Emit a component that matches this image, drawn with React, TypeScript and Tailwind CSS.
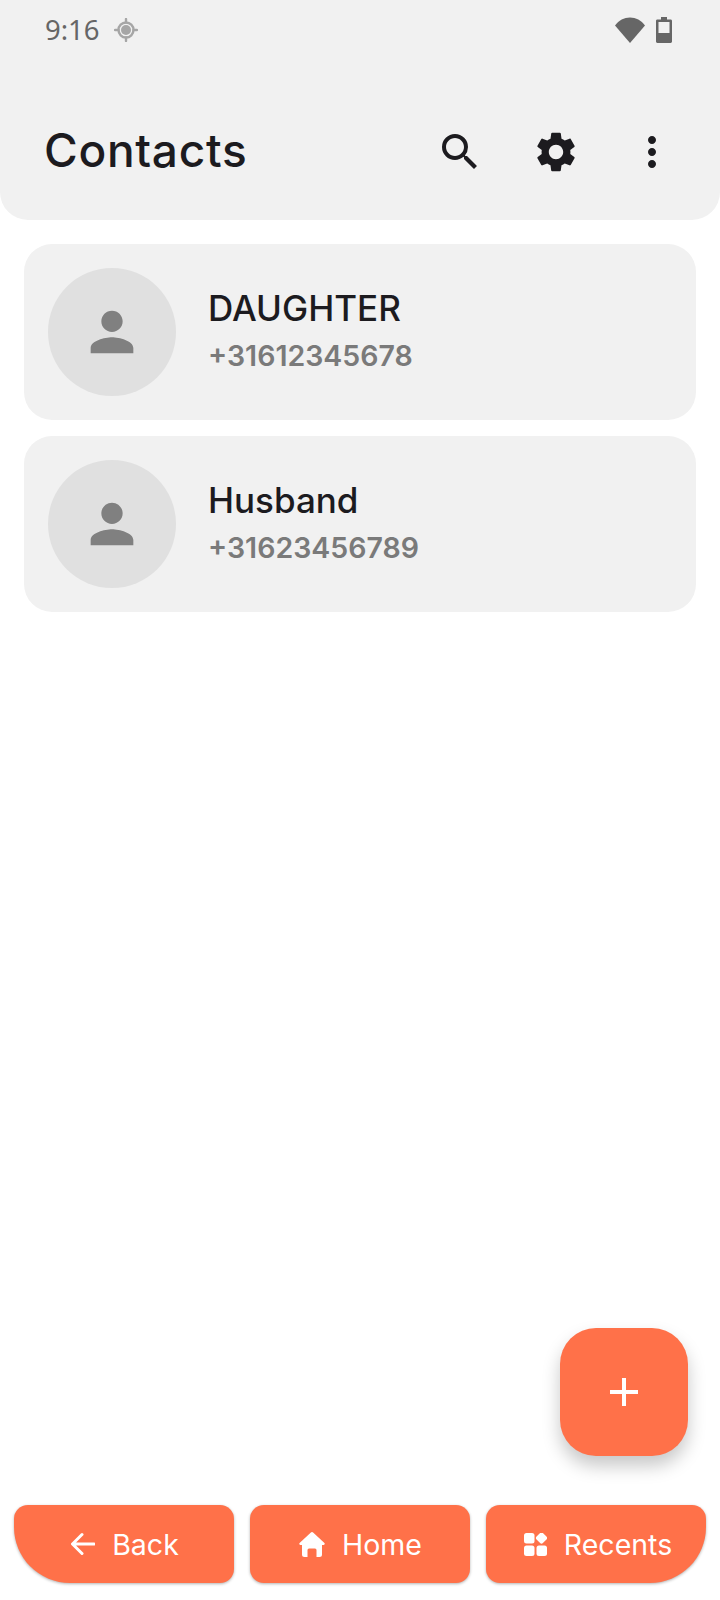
import React from "react";

function MaterialIcon({ d, className }: { d: string; className: string }) {
  return (
    <svg viewBox="0 0 24 24" fill="currentColor" className={className}>
      <path d={d} />
    </svg>
  );
}

const PERSON = "M12 12c2.21 0 4-1.79 4-4s-1.79-4-4-4-4 1.79-4 4 1.79 4 4 4zm0 2c-2.67 0-8 1.34-8 4v2h16v-2c0-2.66-5.33-4-8-4z";
const SEARCH = "M15.5 14h-.79l-.28-.27A6.471 6.471 0 0 0 16 9.5 6.5 6.5 0 1 0 9.5 16c1.61 0 3.09-.59 4.23-1.57l.27.28v.79l5 4.99L20.49 19l-4.99-5zm-6 0C7.01 14 5 11.99 5 9.5S7.01 5 9.5 5 14 7.01 14 9.5 11.99 14 9.5 14z";
const GEAR = "M19.14 12.94c.04-.3.06-.61.06-.94 0-.32-.02-.64-.07-.94l2.03-1.58c.18-.14.23-.41.12-.61l-1.92-3.32c-.12-.22-.37-.29-.59-.22l-2.39.96c-.5-.38-1.03-.7-1.62-.94l-.36-2.54c-.04-.24-.24-.41-.48-.41h-3.84c-.24 0-.43.17-.47.41l-.36 2.54c-.59.24-1.13.57-1.62.94l-2.39-.96c-.22-.08-.47 0-.59.22L2.74 8.87c-.12.21-.08.47.12.61l2.03 1.58c-.05.3-.09.63-.09.94s.02.64.07.94l-2.03 1.58c-.18.14-.23.41-.12.61l1.92 3.32c.12.22.37.29.59.22l2.39-.96c.5.38 1.03.7 1.62.94l.36 2.54c.05.24.24.41.48.41h3.84c.24 0 .44-.17.47-.41l.36-2.54c.59-.24 1.13-.56 1.62-.94l2.39.96c.22.08.47 0 .59-.22l1.92-3.32c.12-.22.07-.47-.12-.61l-2.01-1.58zM12 15.6c-1.98 0-3.6-1.62-3.6-3.6s1.62-3.6 3.6-3.6 3.6 1.62 3.6 3.6-1.62 3.6-3.6 3.6z";
const MORE = "M12 8c1.1 0 2-.9 2-2s-.9-2-2-2-2 .9-2 2 .9 2 2 2zm0 2c-1.1 0-2 .9-2 2s.9 2 2 2 2-.9 2-2-.9-2-2-2zm0 6c-1.1 0-2 .9-2 2s.9 2 2 2 2-.9 2-2-.9-2-2-2z";

function StatusBar() {
  return (
    <div className="flex h-[60px] items-center justify-between pl-[45px] pr-[48px]">
      <div className="flex items-center gap-[14px]">
        <span className="font-['Noto_Sans',sans-serif] text-[27.5px] leading-none text-[#666666]">9:16</span>
        {/* location-fix glyph: ring with crosshair ticks and a solid centre */}
        <svg viewBox="0 0 24 24" className="h-[24px] w-[24px]" fill="none" stroke="#a6a6a6">
          <circle cx="12" cy="12" r="7.500" strokeWidth="2.400" />
          <circle cx="12" cy="12" r="5" fill="#a6a6a6" strokeWidth="0" />
          <path d="M12 1v3.500M12 19.500V23M1 12h3.500M19.500 12H23" strokeWidth="2.400" strokeLinecap="round" />
        </svg>
      </div>
      <div className="flex items-center gap-[11px]">
        <svg viewBox="0 0 30 26" className="h-[26px] w-[30px]" fill="#666666">
          <path d="M0 8.500C3.800 3.200 9 .5 15 .5s11.200 2.700 15 8L15 26z" />
        </svg>
        <svg viewBox="0 0 16 26" className="h-[26px] w-[16px]">
          <path d="M5 0h6v2.500h3.600c.8 0 1.400.6 1.400 1.400v20.700c0 .8-.6 1.400-1.400 1.400H1.400C.6 26 0 25.400 0 24.600V3.900c0-.8.6-1.400 1.400-1.400H5z" fill="#666666" />
          <rect x="2.500" y="5" width="11" height="11" fill="#f1f1f1" />
        </svg>
      </div>
    </div>
  );
}

function Header() {
  return (
    <header className="h-[220px] rounded-b-[28px] bg-[#f1f1f1]">
      <StatusBar />
      <div className="mt-[44px] flex h-[96px] items-center justify-between pl-[44px] pr-[20px]">
        <h1 className="-translate-y-[2px] font-['Inter',sans-serif] text-[46px] font-medium leading-none tracking-[0.7px] text-[#1c1b1f]">
          Contacts
        </h1>
        <div className="flex text-[#1c1b1f]">
          <div className="flex h-[96px] w-[96px] items-center justify-center">
            <MaterialIcon d={SEARCH} className="h-[48px] w-[48px]" />
          </div>
          <div className="flex h-[96px] w-[96px] items-center justify-center">
            <MaterialIcon d={GEAR} className="h-[48px] w-[48px]" />
          </div>
          <div className="flex h-[96px] w-[96px] items-center justify-center">
            <MaterialIcon d={MORE} className="h-[48px] w-[48px]" />
          </div>
        </div>
      </div>
    </header>
  );
}

function ContactCard({ name, phone }: { name: string; phone: string }) {
  return (
    <div className="flex h-[176px] items-center gap-[32px] rounded-[28px] bg-[#f1f1f1] pl-[24px]">
      <div className="flex h-[128px] w-[128px] items-center justify-center rounded-full bg-[#e0e0e0]">
        <MaterialIcon d={PERSON} className="h-[64px] w-[64px] text-[#808080]" />
      </div>
      <div className="font-['Inter',sans-serif]">
        <div className="text-[35px] font-medium leading-[47px] text-[#1c1b1f]">{name}</div>
        <div className="text-[28.500px] font-semibold leading-[47px] text-[#7a7a7a]">{phone}</div>
      </div>
    </div>
  );
}

function NavButton({ label, icon, corner }: { label: string; icon: React.ReactNode; corner: string }) {
  return (
    <button
      className={`flex h-[78px] items-center justify-center gap-[17px] bg-[#ff7149] font-['Inter',sans-serif] text-[28.500px] text-white shadow-[0_1px_3px_rgba(0,0,0,0.3)] ${corner}`}
    >
      {icon}
      <span className="translate-y-[1px]">{label}</span>
    </button>
  );
}

export default function App() {
  return (
    <div className="flex min-h-[1600px] flex-col bg-white">
      <Header />
      <main className="flex flex-col gap-[16px] px-[24px] pt-[24px]">
        <ContactCard name="DAUGHTER" phone="+31612345678" />
        <ContactCard name="Husband" phone="+31623456789" />
      </main>
      <div className="mt-auto flex justify-end pr-[32px]">
        <button className="flex h-[128px] w-[128px] items-center justify-center rounded-[36px] bg-[#ff7149] shadow-[0_10px_18px_rgba(0,0,0,0.22)]">
          <svg viewBox="0 0 28 28" className="h-[28px] w-[28px]" fill="#ffffff">
            <rect x="12" y="0" width="4" height="28" />
            <rect x="0" y="12" width="28" height="4" />
          </svg>
        </button>
      </div>
      <nav className="mb-[17px] mt-[49px] grid grid-cols-3 gap-[16px] px-[14px]">
        <NavButton
          label="Back"
          corner="rounded-[14px] rounded-bl-[56px] pl-[2px]"
          icon={
            <svg viewBox="0 0 24 24" className="h-[24px] w-[24px]" fill="none" stroke="#ffffff" strokeWidth="3" strokeLinecap="round" strokeLinejoin="round">
              <path d="M23 12H2M11 2.500 1.500 12l9.500 9.500" />
            </svg>
          }
        />
        <NavButton
          label="Home"
          corner="rounded-[14px] pl-[1px]"
          icon={
            <svg viewBox="0 0 26 25" className="h-[25px] w-[26px]" fill="#ffffff">
              <path d="M11.600.7a2 2 0 0 1 2.800 0l11 10.300c.7.700.2 1.900-.8 1.900H23v9.600a2.500 2.500 0 0 1-2.500 2.500H17.500v-7a1.500 1.500 0 0 0-1.500-1.500h-6a1.500 1.500 0 0 0-1.500 1.500v7H5.500A2.500 2.500 0 0 1 3 22.500v-9.600H1.400c-1 0-1.500-1.200-.8-1.900z" />
            </svg>
          }
        />
        <NavButton
          label="Recents"
          corner="rounded-[14px] rounded-br-[56px] pl-[4px]"
          icon={
            <svg viewBox="0 0 23 23" className="h-[23px] w-[23px]" fill="#ffffff">
              <rect x="0" y="0" width="10.500" height="10.500" rx="2.500" />
              <rect x="13" y="0.500" width="9" height="9" rx="2" transform="rotate(45 17.500 5)" />
              <rect x="0" y="12.500" width="10.500" height="10.500" rx="2.500" />
              <rect x="12.500" y="12.500" width="10.500" height="10.500" rx="2.500" />
            </svg>
          }
        />
      </nav>
    </div>
  );
}
